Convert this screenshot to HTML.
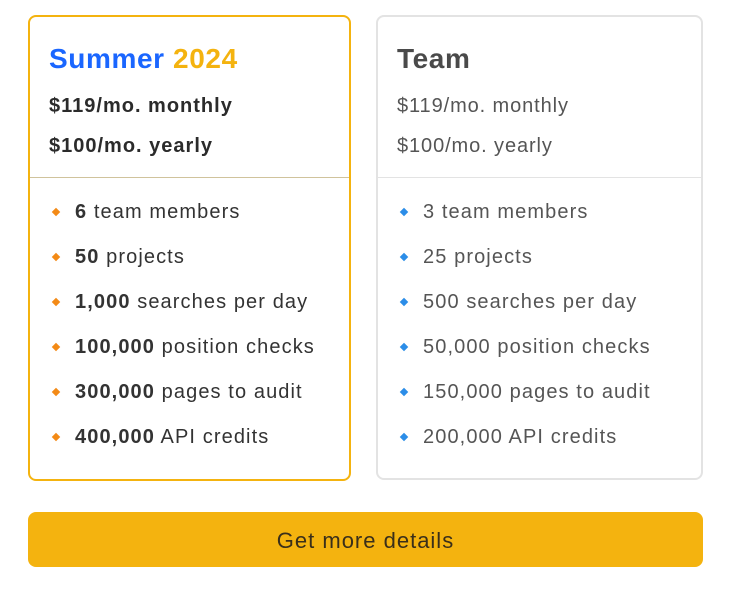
<!DOCTYPE html>
<html><head><style>
body{margin:0;width:736px;height:591px;background:#fff;font-family:"Liberation Sans",Arial,sans-serif;position:relative;overflow:hidden}
.card{position:absolute;top:15px;width:320px;height:463px;border:1px solid #e0e0e0;border-radius:8px;box-sizing:border-box}
.c1{left:28px;border:2px solid #f4b30f;width:323px;height:466px}
.c2{left:376px;width:327px;height:465px;border-width:2px;border-color:#e3e3e3}
.title{position:absolute;left:19px;top:26px;font-size:28px;font-weight:bold;color:#4a4a4a;letter-spacing:0.6px}
.p{position:absolute;left:19px;font-size:20px;color:#555;letter-spacing:0.9px}
.c1 .p{font-weight:bold;color:#2b2b2b;letter-spacing:1px}
.hr{position:absolute;left:0;right:0;top:160px;height:1px;background:#e3e3e3}
.c1 .hr{background:#d0c39c}
ul{position:absolute;left:19px;top:181px;margin:0;padding:0;list-style:none}
li{height:45px;font-size:20px;color:#555;position:relative;padding-left:26px;line-height:28px;letter-spacing:1.1px}
.c1 li{color:#333}
li:before{content:"";position:absolute;left:4px;top:11px;width:6px;height:6px;transform:rotate(45deg);background:#2b8de8}
.c1 li:before{background:#f38a16}
.btn{position:absolute;left:28px;top:512px;width:675px;height:55px;background:#f4b30f;border-radius:8px;text-align:center;line-height:57px;font-size:22px;color:#3a2f1a;letter-spacing:1px}
</style></head><body>
<div class="card c1">
<div class="title"><span style="color:#1a66ff">Summer</span> <span style="color:#f4b30f">2024</span></div>
<div class="p" style="top:78px">$119/mo. monthly</div>
<div class="p" style="top:118px">$100/mo. yearly</div>
<div class="hr"></div>
<ul>
<li><b>6</b> team members</li>
<li><b>50</b> projects</li>
<li><b>1,000</b> searches per day</li>
<li><b>100,000</b> position checks</li>
<li><b>300,000</b> pages to audit</li>
<li><b>400,000</b> API credits</li>
</ul>
</div>
<div class="card c2">
<div class="title" style="left:19px">Team</div>
<div class="p" style="top:78px;left:19px">$119/mo. monthly</div>
<div class="p" style="top:118px;left:19px">$100/mo. yearly</div>
<div class="hr" style="top:160px"></div>
<ul style="left:19px;top:181px">
<li>3 team members</li>
<li>25 projects</li>
<li>500 searches per day</li>
<li>50,000 position checks</li>
<li>150,000 pages to audit</li>
<li>200,000 API credits</li>
</ul>
</div>
<div class="btn">Get more details</div>
</body></html>
